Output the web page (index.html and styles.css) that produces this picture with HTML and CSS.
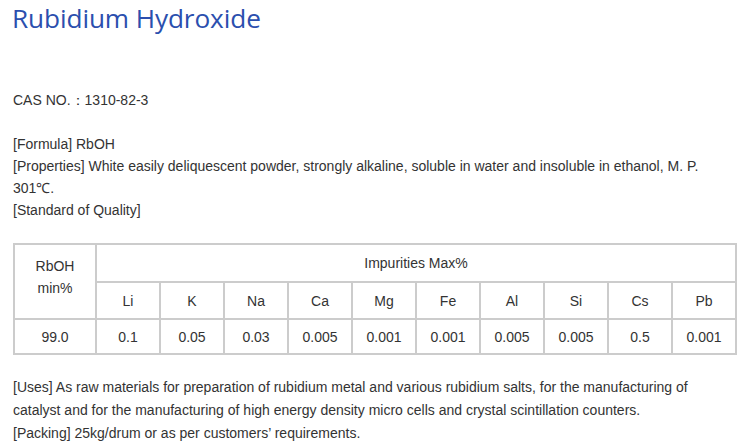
FILE: index.html
```html
<!DOCTYPE html>
<html>
<head>
<meta charset="utf-8">
<link rel="stylesheet" href="styles.css">
</head>
<body>
<div class="page">
  <h1 class="title">Rubidium Hydroxide</h1>
  <p class="cas">CAS NO.：1310-82-3</p>
  <div class="block">
    <p>[Formula] RbOH</p>
    <p>[Properties] White easily deliquescent powder, strongly alkaline, soluble in water and insoluble in ethanol, M. P. 301℃.</p>
    <p>[Standard of Quality]</p>
  </div>
  <table class="spec">
    <colgroup>
      <col class="c-first">
      <col><col><col><col><col><col><col><col><col><col>
    </colgroup>
    <tr class="r1">
      <td rowspan="2" class="first">RbOH<br>min%</td>
      <td colspan="10" class="head">Impurities Max%</td>
    </tr>
    <tr class="r2">
      <td>Li</td><td>K</td><td>Na</td><td>Ca</td><td>Mg</td><td>Fe</td><td>Al</td><td>Si</td><td>Cs</td><td>Pb</td>
    </tr>
    <tr class="r3">
      <td>99.0</td><td>0.1</td><td>0.05</td><td>0.03</td><td>0.005</td><td>0.001</td><td>0.001</td><td>0.005</td><td>0.005</td><td>0.5</td><td>0.001</td>
    </tr>
  </table>
  <div class="block uses">
    <p>[Uses] As raw materials for preparation of rubidium metal and various rubidium salts, for the manufacturing of catalyst and for the manufacturing of high energy density micro cells and crystal scintillation counters.</p>
    <p>[Packing] 25kg/drum or as per customers’ requirements.</p>
  </div>
</div>
</body>
</html>
```
FILE: styles.css
```css
html, body {
  margin: 0;
  padding: 0;
  background: #fff;
}
.page {
  padding: 0 0 0 13px;
  width: 724px;
  font-family: "Liberation Sans", Arial, sans-serif;
  font-size: 14px;
  color: #333;
}
.title {
  margin: 0 0 0 -1px;
  font-family: "Open Sans", "Noto Sans", sans-serif;
  font-weight: 400;
  font-size: 26.2px;
  line-height: 36px;
  color: #2b4fae;
  letter-spacing: -0.1px;
}
p {
  margin: 0;
}
.cas {
  margin-top: 53px;
  line-height: 22px;
}
.block {
  margin-top: 22px;
  line-height: 22px;
}
.spec {
  margin-top: 22px;
  border-collapse: collapse;
  width: 724px;
  table-layout: fixed;
  text-align: center;
  color: #333;
}
.spec col {
  width: 64px;
}
.spec col.c-first {
  width: 82px;
}
.spec td {
  border: 2px solid #cccccc;
  padding: 0;
}
.spec .r1 td.head {
  height: 36px;
}
.spec .r2 td {
  height: 35px;
}
.spec .r3 td {
  height: 33px;
}
.spec td.first {
  vertical-align: top;
  padding-top: 10px;
  line-height: 22px;
}
.uses {
  margin-top: 21px;
  line-height: 23px;
}
```
